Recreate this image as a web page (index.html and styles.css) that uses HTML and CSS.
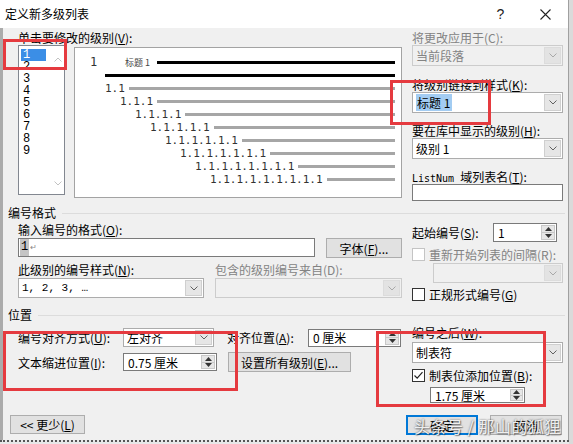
FILE: index.html
```html
<!DOCTYPE html>
<html lang="zh-CN">

<head>
    <meta charset="UTF-8">
    <meta name="viewport" content="width=device-width, initial-scale=1.0">
    <title>定义新多级列表</title>
    <link rel="stylesheet" href="styles.css">
</head>

<body>
    <div class="dialog">
        <div class="titlebar">
            <span class="title">定义新多级列表</span>
            <span class="tb-btn help">?</span>
            <span class="tb-btn close">
                <svg width="11" height="11" viewBox="0 0 11 11"><path d="M0.5 0.5 L10.5 10.5 M10.5 0.5 L0.5 10.5" stroke="#222" stroke-width="1.1" fill="none"/></svg>
            </span>
        </div>

        <div class="content">
            <!-- 级别 + 预览 + 右侧设置 -->
            <div class="top">
                <div class="levels">
                    <div class="label">单击要修改的级别(<u>V</u>):</div>
                    <div class="levels-row">
                        <div class="listbox">
                            <div class="list-items">
                                <div class="item selected">1</div>
                                <div class="item">2</div>
                                <div class="item">3</div>
                                <div class="item">4</div>
                                <div class="item">5</div>
                                <div class="item">6</div>
                                <div class="item">7</div>
                                <div class="item">8</div>
                                <div class="item">9</div>
                            </div>
                            <div class="list-scroll">
                                <svg width="8" height="5" viewBox="0 0 8 5"><path d="M0.5 4.5 L4 1 L7.5 4.5" fill="none" stroke="#c2c2c2"/></svg>
                                <svg width="8" height="5" viewBox="0 0 8 5"><path d="M0.5 0.5 L4 4 L7.5 0.5" fill="none" stroke="#c2c2c2"/></svg>
                            </div>
                        </div>
                        <div class="preview">
                            <div class="pv-row lv1"><span class="pv-num first">1</span><span class="pv-style">标题 1</span><span class="pv-line dark"></span></div>
                            <div class="pv-row lv2"><span class="pv-line dark"></span></div>
                            <div class="pv-row lv2"><span class="pv-num">1.1</span><span class="pv-line"></span></div>
                            <div class="pv-row lv3"><span class="pv-num">1.1.1</span><span class="pv-line"></span></div>
                            <div class="pv-row lv4"><span class="pv-num">1.1.1.1</span><span class="pv-line"></span></div>
                            <div class="pv-row lv5"><span class="pv-num">1.1.1.1.1</span><span class="pv-line"></span></div>
                            <div class="pv-row lv6"><span class="pv-num">1.1.1.1.1.1</span><span class="pv-line"></span></div>
                            <div class="pv-row lv7"><span class="pv-num">1.1.1.1.1.1.1</span><span class="pv-line"></span></div>
                            <div class="pv-row lv8"><span class="pv-num">1.1.1.1.1.1.1.1</span><span class="pv-line"></span></div>
                            <div class="pv-row lv9"><span class="pv-num">1.1.1.1.1.1.1.1.1</span><span class="pv-line"></span></div>
                        </div>
                    </div>
                </div>

                <div class="right">
                    <div class="field">
                        <div class="label disabled-text">将更改应用于(C):</div>
                        <div class="combo disabled">
                            <span class="combo-text">当前段落</span>
                            <span class="drop"><svg width="8" height="5" viewBox="0 0 8 5"><path d="M0.5 0.5 L4 4 L7.5 0.5" fill="none" stroke="#a8a8a8"/></svg></span>
                        </div>
                    </div>
                    <div class="field">
                        <div class="label">将级别链接到样式(<u>K</u>):</div>
                        <div class="combo">
                            <span class="combo-text"><span class="sel">标题 1</span></span>
                            <span class="drop"><svg width="8" height="5" viewBox="0 0 8 5"><path d="M0.5 0.5 L4 4 L7.5 0.5" fill="none" stroke="#606060"/></svg></span>
                        </div>
                    </div>
                    <div class="field">
                        <div class="label">要在库中显示的级别(<u>H</u>):</div>
                        <div class="combo">
                            <span class="combo-text">级别 1</span>
                            <span class="drop"><svg width="8" height="5" viewBox="0 0 8 5"><path d="M0.5 0.5 L4 4 L7.5 0.5" fill="none" stroke="#606060"/></svg></span>
                        </div>
                    </div>
                    <div class="field">
                        <div class="label"><span class="mono">ListNum </span>域列表名(<u>T</u>):</div>
                        <div class="textbox short"></div>
                    </div>
                </div>
            </div>

            <!-- 编号格式 -->
            <div class="section-head">编号格式</div>
            <div class="fmt-body">
                <div class="col-left">
                    <div class="label gap1">输入编号的格式(<u>O</u>):</div>
                    <div class="fmt-row">
                        <div class="textbox wide"><span class="hl">1</span><span class="para">↵</span></div>
                        <div class="btn font-btn">字体(<u>F</u>)...</div>
                    </div>
                    <div class="grid2">
                        <div>
                            <div class="label">此级别的编号样式(<u>N</u>):</div>
                            <div class="combo h20">
                                <span class="combo-text nums">1, 2, 3, …</span>
                                <span class="drop"><svg width="8" height="5" viewBox="0 0 8 5"><path d="M0.5 0.5 L4 4 L7.5 0.5" fill="none" stroke="#606060"/></svg></span>
                            </div>
                        </div>
                        <div>
                            <div class="label disabled-text">包含的级别编号来自(D):</div>
                            <div class="combo h20 disabled">
                                <span class="combo-text"></span>
                                <span class="drop"><svg width="8" height="5" viewBox="0 0 8 5"><path d="M0.5 0.5 L4 4 L7.5 0.5" fill="none" stroke="#a8a8a8"/></svg></span>
                            </div>
                        </div>
                    </div>
                </div>
                <div class="col-right">
                    <div class="start-row">
                        <span class="start-label">起始编号(<u>S</u>):</span>
                        <div class="spin start-spin">
                            <span class="spin-text">1</span>
                            <span class="spin-btns">
                                <span><svg width="7" height="4" viewBox="0 0 7 4"><path d="M0 4 L3.5 0 L7 4Z" fill="#333"/></svg></span>
                                <span><svg width="7" height="4" viewBox="0 0 7 4"><path d="M0 0 L3.5 4 L7 0Z" fill="#333"/></svg></span>
                            </span>
                        </div>
                    </div>
                    <div class="check-row restart">
                        <span class="check disabled"></span>
                        <span class="disabled-text">重新开始列表的间隔(R):</span>
                    </div>
                    <div class="combo h20 disabled restart-combo">
                        <span class="combo-text"></span>
                        <span class="drop"><svg width="8" height="5" viewBox="0 0 8 5"><path d="M0.5 0.5 L4 4 L7.5 0.5" fill="none" stroke="#a8a8a8"/></svg></span>
                    </div>
                    <div class="check-row legal">
                        <span class="check"></span>
                        <span>正规形式编号(<u>G</u>)</span>
                    </div>
                </div>
            </div>

            <!-- 位置 -->
            <div class="section-head">位置</div>
            <div class="pos-body">
                <div class="col-left">
                    <div class="pos-row first">
                        <span class="pos-label">编号对齐方式(<u>U</u>):</span>
                        <div class="combo align-combo">
                            <span class="combo-text">左对齐</span>
                            <span class="drop"><svg width="8" height="5" viewBox="0 0 8 5"><path d="M0.5 0.5 L4 4 L7.5 0.5" fill="none" stroke="#606060"/></svg></span>
                        </div>
                        <span class="pos-label2">对齐位置(<u>A</u>):</span>
                        <div class="spin at-spin">
                            <span class="spin-text">0 厘米</span>
                            <span class="spin-btns">
                                <span><svg width="7" height="4" viewBox="0 0 7 4"><path d="M0 4 L3.5 0 L7 4Z" fill="#333"/></svg></span>
                                <span><svg width="7" height="4" viewBox="0 0 7 4"><path d="M0 0 L3.5 4 L7 0Z" fill="#333"/></svg></span>
                            </span>
                        </div>
                    </div>
                    <div class="pos-row second">
                        <span class="pos-label">文本缩进位置(<u>I</u>):</span>
                        <div class="spin indent-spin">
                            <span class="spin-text">0.75 厘米</span>
                            <span class="spin-btns">
                                <span><svg width="7" height="4" viewBox="0 0 7 4"><path d="M0 4 L3.5 0 L7 4Z" fill="#333"/></svg></span>
                                <span><svg width="7" height="4" viewBox="0 0 7 4"><path d="M0 0 L3.5 4 L7 0Z" fill="#333"/></svg></span>
                            </span>
                        </div>
                        <div class="btn all-btn">设置所有级别(<u>E</u>)...</div>
                    </div>
                </div>
                <div class="col-right">
                    <div class="label after-label">编号之后(<u>W</u>):</div>
                    <div class="combo after-combo">
                        <span class="combo-text">制表符</span>
                        <span class="drop"><svg width="8" height="5" viewBox="0 0 8 5"><path d="M0.5 0.5 L4 4 L7.5 0.5" fill="none" stroke="#606060"/></svg></span>
                    </div>
                    <div class="check-row tab-check">
                        <span class="check checked"><svg width="11" height="11" viewBox="0 0 11 11"><path d="M1.5 5.5 L4.2 8.2 L9.5 2.2" fill="none" stroke="#222" stroke-width="1.2"/></svg></span>
                        <span>制表位添加位置(<u>B</u>):</span>
                    </div>
                    <div class="spin tab-spin">
                        <span class="spin-text">1.75 厘米</span>
                        <span class="spin-btns">
                            <span><svg width="7" height="4" viewBox="0 0 7 4"><path d="M0 4 L3.5 0 L7 4Z" fill="#333"/></svg></span>
                            <span><svg width="7" height="4" viewBox="0 0 7 4"><path d="M0 0 L3.5 4 L7 0Z" fill="#333"/></svg></span>
                        </span>
                    </div>
                </div>
            </div>

            <div class="actions">
                <div class="btn less-btn">&lt;&lt; 更少(<u>L</u>)</div>
                <div class="btn ok-btn">确定</div>
                <div class="btn cancel-btn">取消</div>
            </div>
        </div>

        <!-- 标注框 -->
        <div class="mark m1"></div>
        <div class="mark m2"></div>
        <div class="mark m3"></div>
        <div class="mark m4"></div>

        <div class="watermark">头条号 / 那山的狐狸</div>
    </div>
    <div class="doc-edge"></div>
</body>

</html>
```

FILE: styles.css
```css
* {
    margin: 0;
    padding: 0;
    box-sizing: border-box;
}

body {
    background: #dadada;
    font-family: "Noto Sans CJK SC", "Microsoft YaHei", sans-serif;
    font-size: 12px;
    color: #000;
}

u {
    text-decoration: underline;
    text-underline-offset: 1px;
}

.dialog {
    position: relative;
    width: 569px;
    height: 440px;
    background: #f0f0f0;
    border-right: 1px solid #a0a0a0;
    overflow: hidden;
}

/* 标题栏 */
.titlebar {
    display: flex;
    align-items: center;
    height: 28px;
    padding-left: 5px;
    background: #fff;
}

.title {
    flex: 1;
    line-height: 16px;
}

.tb-btn {
    display: flex;
    justify-content: center;
    align-items: center;
    width: 45px;
    height: 28px;
}

.help {
    font-family: "Liberation Sans", sans-serif;
    font-size: 14px;
    color: #222;
}

.content {
    height: 412px;
    border-left: 3px solid #ababab;
    padding-left: 5px;
}

.label {
    height: 15px;
    line-height: 15px;
    white-space: nowrap;
}

.disabled-text {
    color: #838383;
}

.mono {
    font-family: "DejaVu Sans Mono", monospace;
    font-size: 10px;
}

/* 顶部 */
.top {
    display: flex;
    gap: 10px;
    height: 177px;
    margin-left: 10px;
}

.levels {
    width: 384px;
}

.levels .label {
    margin-top: 2px;
}

.levels-row {
    display: flex;
    align-items: flex-start;
}

.listbox {
    display: flex;
    width: 47px;
    height: 150px;
    border: 1px solid #828790;
    background: #fff;
}

.list-items {
    width: 32px;
    padding: 3px 0 0 2px;
}

.item {
    width: 25px;
    height: 12px;
    padding-left: 2px;
    line-height: 12px;
    font-family: "Liberation Mono", monospace;
    font-size: 12px;
}

.item.selected {
    background: #3b8ee6;
    color: #fff;
}

.list-scroll {
    flex: 1;
    display: flex;
    flex-direction: column;
    justify-content: space-between;
    align-items: center;
    padding: 11px 0 8px;
}

.preview {
    width: 328px;
    height: 151px;
    margin: 2px 0 0 9px;
    padding: 8px 6px 0 0;
    border: 1px solid #a3a3a3;
    background: #fff;
}

.pv-row {
    display: flex;
    align-items: center;
    height: 13px;
}

.pv-num {
    margin-right: 4px;
    font-family: "DejaVu Sans Mono", monospace;
    font-size: 11px;
    line-height: 13px;
    color: #333;
    white-space: nowrap;
}

.pv-num.first {
    width: 35px;
    margin-right: 0;
    font-size: 12px;
}

.pv-style {
    width: 32px;
    font-size: 9px;
    color: #444;
    white-space: nowrap;
}

.pv-line {
    flex: 1;
    height: 3px;
    background: #a6a6a6;
}

.pv-line.dark {
    background: #000;
}

.lv1 { padding-left: 15px; }
.lv2 { padding-left: 30px; }
.lv3 { padding-left: 45px; }
.lv4 { padding-left: 60px; }
.lv5 { padding-left: 75px; }
.lv6 { padding-left: 90px; }
.lv7 { padding-left: 105px; }
.lv8 { padding-left: 120px; }
.lv9 { padding-left: 135px; }

.right {
    width: 151px;
}

.right .field:first-child .label {
    margin-top: 2px;
}

.right .field:nth-child(2) {
    margin-top: 11px;
}

.right .field:nth-child(3),
.right .field:nth-child(4) {
    margin-top: 10px;
}

/* 下拉框 */
.combo {
    display: flex;
    height: 21px;
    border: 1px solid #acacac;
    background: #fff;
}

.combo.h20 {
    height: 20px;
}

.combo-text {
    flex: 1;
    padding-left: 3px;
    display: flex;
    align-items: center;
    white-space: nowrap;
    overflow: hidden;
}

.combo-text.nums {
    font-family: "Liberation Mono", monospace;
    font-size: 11px;
}

.sel {
    background: #a3ccf2;
    padding: 0 2px 0 1px;
    line-height: 17px;
}

.drop {
    display: flex;
    justify-content: center;
    align-items: center;
    width: 17px;
    margin: 1px;
    background: #e6e6e6;
    border: 1px solid #cfcfcf;
}

.combo.disabled {
    background: #f0f0f0;
    border-color: #cccccc;
    color: #838383;
}

.combo.disabled .drop {
    background: #e3e3e3;
    border-color: #dcdcdc;
}

.textbox {
    height: 17px;
    border: 1px solid #7a7a7a;
    background: #fff;
}

.textbox.short {
    width: 151px;
}

/* 分组标题 */
.section-head {
    display: flex;
    align-items: center;
    height: 16px;
    line-height: 16px;
}

.section-head::after {
    content: "";
    flex: 1;
    margin: 0 3px 0 6px;
    border-top: 1px solid #dcdcdc;
}

.fmt-body,
.pos-body {
    display: flex;
    gap: 9px;
    margin-left: 10px;
}

.fmt-body {
    height: 86px;
}

.pos-body {
    height: 92px;
}

.col-left {
    width: 385px;
}

.col-right {
    width: 151px;
}

.gap1 {
    margin-top: 1px;
}

.fmt-row {
    display: flex;
    gap: 11px;
    margin-top: 1px;
}

.textbox.wide {
    width: 297px;
    height: 19px;
    display: flex;
    align-items: center;
    padding-left: 1px;
}

.hl {
    background: #c4c4c4;
    padding: 0 1px;
    line-height: 17px;
    font-family: "Liberation Mono", monospace;
}

.para {
    font-family: "DejaVu Sans", sans-serif;
    font-size: 8px;
    color: #888;
    margin-left: 1px;
}

/* 按钮 */
.btn {
    display: flex;
    justify-content: center;
    align-items: center;
    height: 20px;
    border: 1px solid #adadad;
    background: #e1e1e1;
    white-space: nowrap;
}

.font-btn {
    width: 76px;
}

.grid2 {
    display: grid;
    grid-template-columns: 186px 187px;
    column-gap: 11px;
    margin-top: 4px;
}

.grid2 .label {
    height: 16px;
    line-height: 16px;
}

.start-row {
    display: flex;
    align-items: center;
    height: 19px;
    margin-top: 2px;
}

.start-label {
    width: 81px;
    white-space: nowrap;
}

/* 微调框 */
.spin {
    display: flex;
    border: 1px solid #7a7a7a;
    background: #fff;
}

.spin-text {
    flex: 1;
    display: flex;
    align-items: center;
    padding-left: 4px;
    white-space: nowrap;
}

.spin-btns {
    display: flex;
    flex-direction: column;
    width: 14px;
    margin: 1px;
    background: #e6e6e6;
    border: 1px solid #c8c8c8;
}

.spin-btns span {
    flex: 1;
    display: flex;
    justify-content: center;
    align-items: center;
}

.spin-btns span + span {
    border-top: 1px solid #c8c8c8;
}

.start-spin {
    width: 64px;
    height: 19px;
}

.check-row {
    display: flex;
    align-items: center;
    gap: 4px;
    height: 16px;
    white-space: nowrap;
}

.check {
    display: flex;
    justify-content: center;
    align-items: center;
    width: 13px;
    height: 13px;
    border: 1px solid #333;
    background: #fff;
}

.check.disabled {
    border-color: #c4c4c4;
}

.restart {
    margin-top: 4px;
}

.restart-combo {
    width: 130px;
    margin: 1px 0 0 21px;
}

.legal {
    margin-top: 3px;
}

.pos-row {
    display: flex;
    align-items: center;
}

.pos-row.first {
    height: 19px;
    margin-top: 5px;
}

.pos-row.second {
    height: 20px;
    margin-top: 5px;
}

.pos-label {
    width: 105px;
    white-space: nowrap;
}

.pos-label2 {
    width: 81px;
    margin-left: 13px;
    white-space: nowrap;
}

.align-combo {
    width: 91px;
    height: 19px;
}

.at-spin {
    width: 93px;
    height: 18px;
}

.indent-spin {
    width: 94px;
    height: 18px;
}

.all-btn {
    width: 123px;
    margin-left: 11px;
}

.after-label {
    margin-top: 2px;
}

.after-combo {
    margin-top: 2px;
}

.tab-check {
    margin-top: 4px;
}

.tab-spin {
    width: 95px;
    height: 16px;
    margin: 4px 0 0 18px;
}

.tab-spin .spin-btns {
    width: 13px;
}

/* 底部按钮 */
.actions {
    display: flex;
    height: 20px;
    margin: 0 6px 0 2px;
}

.less-btn {
    width: 75px;
    height: 19px;
}

.ok-btn {
    width: 72px;
    margin-left: auto;
    border: 2px solid #0078d7;
}

.cancel-btn {
    width: 72px;
    margin-left: 12px;
}

/* 红色标注框 */
.mark {
    position: absolute;
    border: 3px solid #e53a3f;
}

.m1 {
    left: 3px;
    top: 39px;
    width: 64px;
    height: 31px;
}

.m2 {
    left: 390px;
    top: 80px;
    width: 101px;
    height: 45px;
}

.m3 {
    left: 3px;
    top: 331px;
    width: 235px;
    height: 60px;
}

.m4 {
    left: 376px;
    top: 331px;
    width: 170px;
    height: 76px;
}

.watermark {
    position: absolute;
    left: 414px;
    top: 416px;
    font-size: 16px;
    line-height: 20px;
    letter-spacing: 0.5px;
    color: rgba(255, 255, 255, 0.9);
    text-shadow: 0 0 2px rgba(0, 0, 0, 0.65), 1px 1px 1px rgba(0, 0, 0, 0.35);
    white-space: nowrap;
}

.doc-edge {
    width: 569px;
    height: 4px;
    border-top: 2px dotted #555;
    background: #e8e8e8;
}
```
